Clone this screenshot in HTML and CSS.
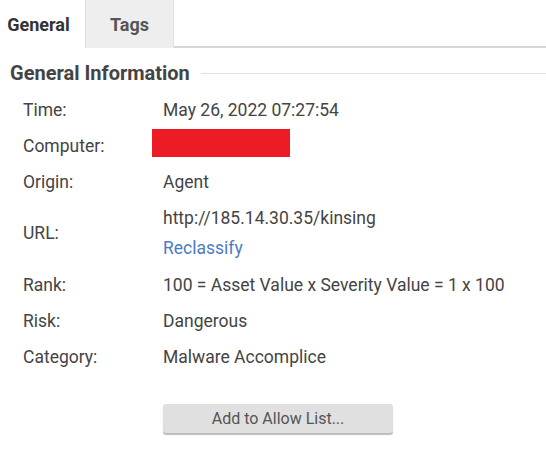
FILE: index.html
```html
<!DOCTYPE html>
<html>
<head>
<meta charset="utf-8">
<link rel="stylesheet" href="styles.css">
</head>
<body>
<div class="tabs">
  <div class="tab active">General</div>
  <div class="tab">Tags</div>
  <div class="tab-fill"></div>
</div>
<div class="section-head">
  <h2>General Information</h2>
  <div class="rule"></div>
</div>
<div class="rows">
  <div class="row"><div class="label">Time:</div><div class="value">May 26, 2022 07:27:54</div></div>
  <div class="row"><div class="label">Computer:</div><div class="value"><span class="redact"></span></div></div>
  <div class="row"><div class="label">Origin:</div><div class="value">Agent</div></div>
  <div class="row url"><div class="label">URL:</div><div class="value stack"><div>http://185.14.30.35/kinsing</div><a class="link">Reclassify</a></div></div>
  <div class="row"><div class="label">Rank:</div><div class="value">100 = Asset Value x Severity Value = 1 x 100</div></div>
  <div class="row"><div class="label">Risk:</div><div class="value">Dangerous</div></div>
  <div class="row"><div class="label">Category:</div><div class="value">Malware Accomplice</div></div>
</div>
<div class="actions">
  <button class="btn">Add to Allow List...</button>
</div>
</body>
</html>
```
FILE: styles.css
```css
html, body {
  margin: 0;
  padding: 0;
  background: #fff;
}
body {
  font-family: Roboto, "Liberation Sans", sans-serif;
  color: #444;
  width: 546px;
  height: 452px;
  overflow: hidden;
}
.tabs {
  display: flex;
  height: 48px;
}
.tab {
  font-size: 18px;
  font-weight: bold;
  display: flex;
  align-items: center;
  justify-content: center;
  box-sizing: border-box;
}
.tab.active {
  width: 85px;
  color: #333;
  background: #fff;
  padding-right: 8px;
}
.tab:not(.active) {
  width: 89px;
  color: #555;
  background: #eeeeee;
  border-left: 1px solid #dadada;
  border-right: 1px solid #e4e4e4;
}
.tab-fill {
  flex: 1;
  border-bottom: 2px solid #d6d6d6;
  box-sizing: border-box;
  height: 48px;
}
.section-head {
  display: flex;
  align-items: center;
  gap: 11px;
  padding: 13px 0 0 10px;
  height: 24px;
}
.section-head h2 {
  margin: 0;
  font-size: 20px;
  font-weight: bold;
  color: #444;
  white-space: nowrap;
}
.rule {
  flex: 1;
  height: 1px;
  background: #e2e2e2;
}
.rows {
  padding-top: 7px;
}
.row {
  display: grid;
  grid-template-columns: 140px 1fr;
  align-items: center;
  padding: 8px 0 8px 23px;
  font-size: 17.5px;
  line-height: 20px;
}
.row.url {
  padding-bottom: 9px;
}
.stack {
  display: flex;
  flex-direction: column;
  gap: 10px;
}
.link {
  color: #4d7bc4;
}
.redact {
  display: block;
  width: 138px;
  height: 28px;
  background: #ed1c24;
  margin-left: -11px;
  margin-top: -7px;
  margin-bottom: -1px;
}
.actions {
  padding: 29px 0 0 163px;
}
.btn {
  width: 230px;
  height: 29px;
  border: none;
  border-radius: 3px;
  background: #e0e0e0;
  box-shadow: 0 2px 1px #bdbdbd;
  font-family: Roboto, "Liberation Sans", sans-serif;
  font-size: 16px;
  color: #555;
  padding: 0;
}
```
